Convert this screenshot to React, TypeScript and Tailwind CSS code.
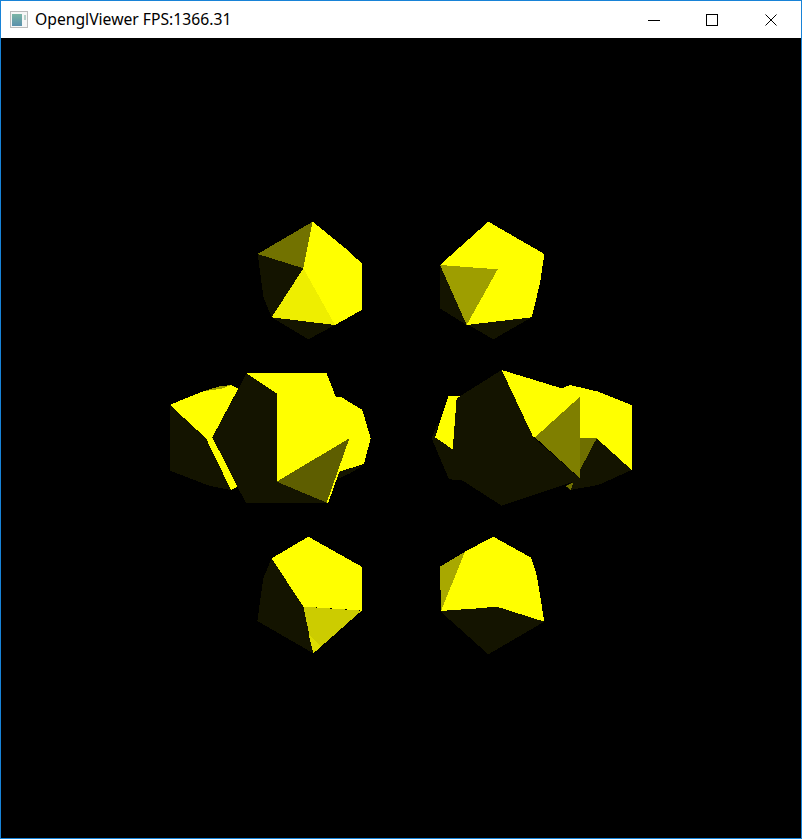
const Shape = ({ x, y, faces }: { x: number; y: number; faces: [string, string][] }) => (
  <g transform={`translate(${x} ${y}) scale(0.33333)`}>
    {faces.map(([fill, points], i) => (
      <polygon key={i} fill={fill} points={points} />
    ))}
  </g>
)

const DARK = "#141400"
const YELLOW = "#ffff00"

const topLeft: [string, string][] = [
  [DARK, "53,132 190,175 95,322 70,260"],
  [DARK, "95,322 285,345 205,388"],
  ["#727200", "53,132 218,35 190,175"],
  [YELLOW, "218,35 320,118 365,160 365,300 285,345 190,175"],
  ["#eeee00", "190,175 285,345 95,322"],
]

const topRight: [string, string][] = [
  [DARK, "45,165 125,345 45,295"],
  [DARK, "45,295 125,345 320,322 205,388"],
  [YELLOW, "190,35 358,132 345,220 320,322 125,345 218,178 45,165"],
  ["#9e9e00", "45,165 218,178 125,345"],
]

const midLeft: [string, string][] = [
  [DARK, "30,135 138,235 232,380 212,390 150,378 30,332"],
  [YELLOW, "30,135 60,122 135,92 212,75 235,85 157,232 138,235"],
  ["#a0a000", "130,94 175,80 212,75 190,85"],
  [YELLOW, "138,235 157,232 233,380 213,390"],
  [DARK, "612,315 536,335 530,358 570,340"],
  [DARK, "260,40 350,100 350,365 500,428 258,428 232,380 157,232"],
  [YELLOW, "350,100 260,40 500,40 527,110 545,112 607,150 632,235 612,312 538,335 568,235 350,365"],
  [YELLOW, "568,235 538,335 505,428 500,428"],
  ["#5e5e00", "350,365 568,235 500,428"],
]

const midRight: [string, string][] = [
  [DARK, "20,235 40,185 30,232 83,268 110,360 72,358"],
  [YELLOW, "70,108 108,108 95,115 83,268 30,232"],
  [YELLOW, "230,30 410,85 435,75 520,95 620,135 620,330 515,235 465,235 465,110 330,232 325,232"],
  [DARK, "515,235 620,330 520,375 435,390 420,378 445,365 465,355 465,330"],
  ["#6f6f00", "465,235 515,235 465,330"],
  [DARK, "95,115 230,30 325,232 465,355 445,365 230,437 110,360 83,268"],
  ["#7f7f00", "330,232 465,110 465,355"],
  ["#6f6f00", "422,378 446,366 437,390"],
]

const bottomLeft: [string, string][] = [
  [YELLOW, "205,35 365,125 365,257 300,252 190,245 95,100"],
  [DARK, "95,100 190,245 220,385 52,288 70,160"],
  ["#cccc00", "190,245 365,257 220,385"],
  ["#dcdc00", "205,325 220,385 242,365"],
]

const bottomRight: [string, string][] = [
  [YELLOW, "205,35 318,98 335,150 358,290 215,245 160,250 48,258 120,80"],
  ["#a8a800", "45,125 120,80 48,258"],
  [DARK, "45,258 160,250 215,245 358,290 190,388"],
]

export default function App() {
  return (
    <div className="flex h-[839px] w-[802px] flex-col border border-t-0 border-[#1883d7] bg-white">
      <div className="flex h-[38px] shrink-0 items-center border-t border-[#1883d7] pl-[8px]">
        <svg width="20" height="20" viewBox="0 0 20 20" className="shrink-0">
          <defs>
            <linearGradient id="appIcon" x1="0" y1="0" x2="0" y2="1">
              <stop offset="0" stopColor="#7ab5a5" />
              <stop offset="1" stopColor="#5a90ac" />
            </linearGradient>
          </defs>
          <rect x="1.5" y="1.5" width="17" height="16" fill="#f6f6f6" stroke="#bcbcbc" />
          <rect x="3" y="4" width="10" height="12" fill="url(#appIcon)" />
          <rect x="15" y="5" width="2" height="5" fill="#b4d0c8" />
        </svg>
        <span className="ml-[6px] font-['Noto_Sans',sans-serif] text-[15.7px] text-black">OpenglViewer FPS:1366.31</span>
        <div className="ml-auto flex h-full">
          <button className="flex w-[58px] items-center justify-center">
            <svg width="12" height="12" viewBox="0 0 12 12"><path d="M0 6.5H12" stroke="#000" fill="none" /></svg>
          </button>
          <button className="flex w-[58px] items-center justify-center">
            <svg width="12" height="12" viewBox="0 0 12 12"><rect x="0.5" y="0.5" width="11" height="11" stroke="#000" fill="none" /></svg>
          </button>
          <button className="flex w-[60px] items-center justify-center">
            <svg width="12" height="12" viewBox="0 0 12 12"><path d="M0.5 0.5L11.5 11.5M11.5 0.5L0.5 11.5" stroke="#000" fill="none" /></svg>
          </button>
        </div>
      </div>
      <svg viewBox="1 38 800 800" shapeRendering="crispEdges" className="block h-[800px] w-[800px] bg-black">
        <Shape x={240} y={210} faces={topLeft} />
        <Shape x={425} y={210} faces={topRight} />
        <Shape x={160} y={360} faces={midLeft} />
        <Shape x={425} y={360} faces={midRight} />
        <Shape x={240} y={525} faces={bottomLeft} />
        <Shape x={425} y={525} faces={bottomRight} />
      </svg>
    </div>
  )
}
